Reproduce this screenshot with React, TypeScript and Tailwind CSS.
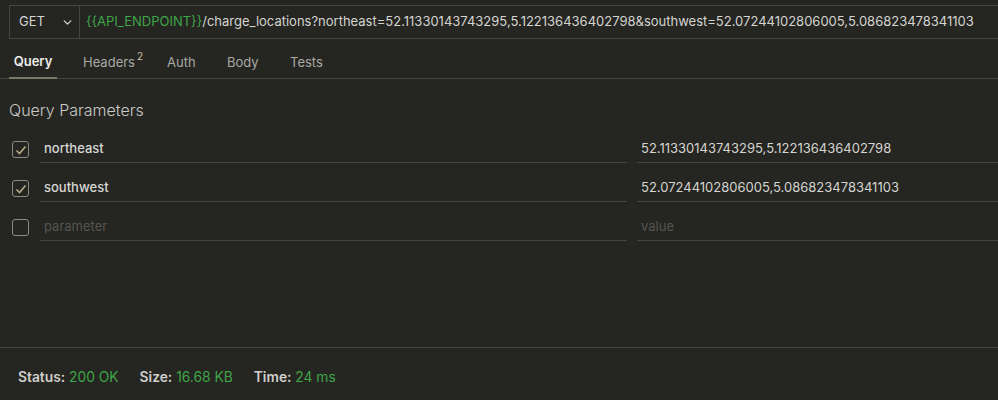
import React from "react";
import { ChevronDown } from "lucide-react";

const params = [
  { key: "northeast", value: "52.11330143743295,5.122136436402798", on: true },
  { key: "southwest", value: "52.07244102806005,5.086823478341103", on: true },
];

const Check: React.FC<{ on: boolean }> = ({ on }) => (
  <div className="w-[17px] h-[17px] rounded-[3px] border border-[#8a8a84] flex items-center justify-center">
    {on && (
      <svg width="12" height="12" viewBox="0 0 12 12" fill="none">
        <path d="M1.5 6.5 L4.5 9.5 L10.5 2.5" stroke="#b9ab8b" strokeWidth="1.6" />
      </svg>
    )}
  </div>
);

const App: React.FC = () => {
  return (
    <div className="w-[998px] h-[400px] bg-[#252521] flex flex-col text-[13px] text-[#d4d4d0] font-['Inter',sans-serif] overflow-hidden">
      {/* URL bar */}
      <div className="pt-[5px] pl-[9px]">
        <div className="h-[34px] flex items-center border-t border-b border-l border-[#46463f]">
          <div className="w-[70px] h-full flex items-center justify-between pl-[9px] pr-[5px] border-r border-[#46463f]">
            <span>GET</span>
            <ChevronDown size={13} strokeWidth={2.5} className="text-[#cfcfcb]" />
          </div>
          <div className="pl-[6px] whitespace-nowrap">
            <span className="text-[#3fa548]">{"{{API_ENDPOINT}}"}</span>
            /charge_locations?northeast=52.11330143743295,5.122136436402798&amp;southwest=52.07244102806005,5.086823478341103
          </div>
        </div>
      </div>

      {/* Tabs */}
      <div className="mt-[8px] h-[32px] flex items-stretch border-b border-[#46463f] pl-[9px]">
        <div className="w-[48px] flex items-center justify-center font-semibold text-[#ececea] border-b-2 border-[#7b776a] -mb-px">
          Query
        </div>
        <div className="ml-[21px] w-[84px] pl-[5px] flex items-center text-[#a9a9a5]">
          Headers<sup className="ml-[2px] text-[10px] -mt-[3px] text-[#c8c0a8]">2</sup>
        </div>
        <div className="w-[60px] pl-[5px] flex items-center text-[#a9a9a5]">Auth</div>
        <div className="w-[63px] pl-[5px] flex items-center text-[#a9a9a5]">Body</div>
        <div className="pl-[5px] flex items-center text-[#a9a9a5]">Tests</div>
      </div>

      {/* Query parameters */}
      <div className="pl-[9px] pt-[21px] text-[16px] font-light text-[#c9c9c5] leading-[20px]">
        Query Parameters
      </div>
      <div className="mt-[15px] flex flex-col gap-[11px]">
        {[...params, { key: "", value: "", on: false }].map((p, i) => (
          <div key={i} className="flex items-center h-[28px]">
            <div className="w-[40px] pl-[12px] pt-[1px]">
              <Check on={p.on} />
            </div>
            <div className="flex-1 h-full flex items-center pl-[4px] border-b border-[#46463f]">
              {p.key ? <span className="font-medium text-[#d8d8d4]">{p.key}</span> : <span className="text-[#55554f]">parameter</span>}
            </div>
            <div className="w-[361px] ml-[10px] h-full flex items-center pl-[4px] border-b border-[#46463f]">
              {p.value ? p.value : <span className="text-[#55554f]">value</span>}
            </div>
          </div>
        ))}
      </div>

      {/* Footer */}
      <div className="mt-auto h-[53px] border-t border-[#46463f] pl-[18px] flex items-center pt-[6px] gap-[21px] text-[13.8px]">
        <span>
          <span className="font-semibold text-[#cfcfcb]">Status:</span> <span className="text-[#3fa548]">200 OK</span>
        </span>
        <span>
          <span className="font-semibold text-[#cfcfcb]">Size:</span> <span className="text-[#3fa548]">16.68 KB</span>
        </span>
        <span>
          <span className="font-semibold text-[#cfcfcb]">Time:</span> <span className="text-[#3fa548]">24 ms</span>
        </span>
      </div>
    </div>
  );
};

export default App;
